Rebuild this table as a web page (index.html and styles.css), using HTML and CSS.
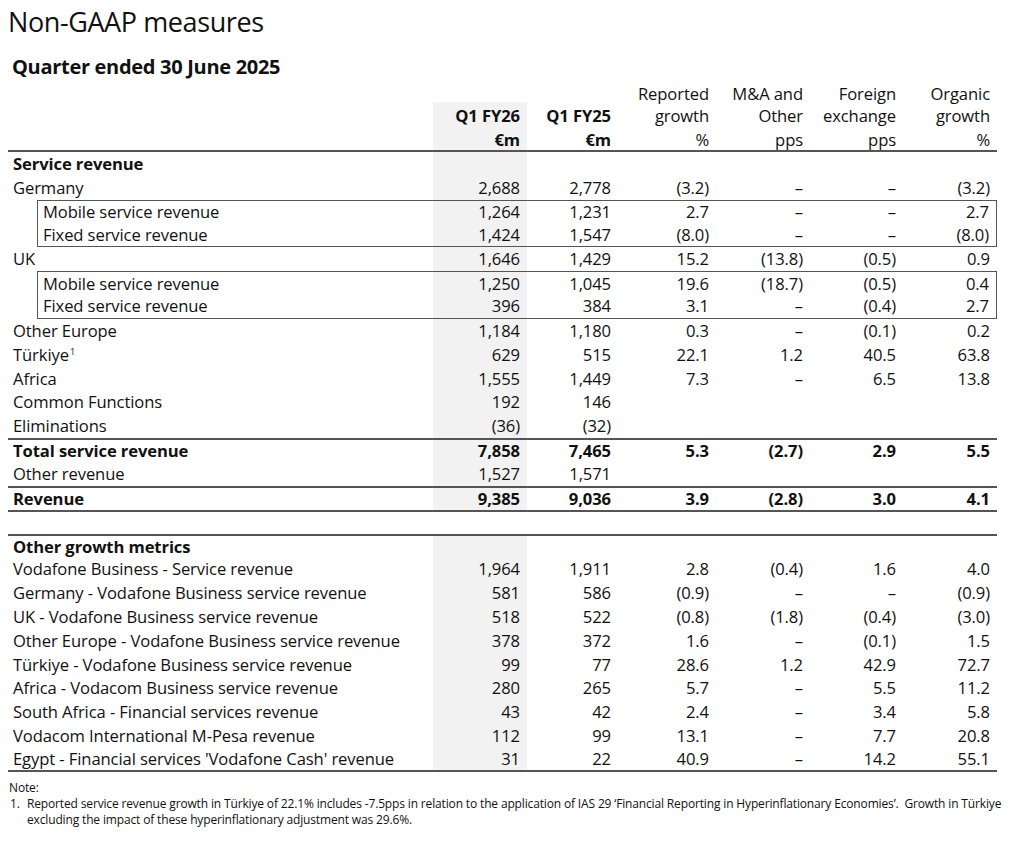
FILE: index.html
```html
<!DOCTYPE html>
<html lang="en">
<head>
<meta charset="utf-8">
<title>Non-GAAP measures</title>
<link rel="stylesheet" href="styles.css">
</head>
<body>
<div class="page">
  <h1 class="title">Non-GAAP measures</h1>
  <h2 class="subtitle">Quarter ended 30 June 2025</h2>

  <div class="tbl">
    <div class="head">
      <div class="hc lab"></div>
      <div class="hc"></div>
      <div class="hc"></div>
      <div class="hc">Reported</div>
      <div class="hc">M&amp;A and</div>
      <div class="hc">Foreign</div>
      <div class="hc">Organic</div>
      <div class="hc lab"></div>
      <div class="hc gray b">Q1 FY26</div>
      <div class="hc b">Q1 FY25</div>
      <div class="hc">growth</div>
      <div class="hc">Other</div>
      <div class="hc">exchange</div>
      <div class="hc">growth</div>
      <div class="hc lab"></div>
      <div class="hc gray b">€m</div>
      <div class="hc b">€m</div>
      <div class="hc">%</div>
      <div class="hc">pps</div>
      <div class="hc">pps</div>
      <div class="hc">%</div>
    </div>

    <div class="row"><div class="lab b">Service revenue</div><div class="n g"></div><div class="n"></div><div class="n"></div><div class="n"></div><div class="n"></div><div class="n"></div></div>
    <div class="row"><div class="lab">Germany</div><div class="n g">2,688</div><div class="n">2,778</div><div class="n">(3.2)</div><div class="n">–</div><div class="n">–</div><div class="n">(3.2)</div></div>
    <div class="box">
      <div class="row sub"><div class="lab">Mobile service revenue</div><div class="n g">1,264</div><div class="n">1,231</div><div class="n">2.7</div><div class="n">–</div><div class="n">–</div><div class="n">2.7</div></div>
      <div class="row sub"><div class="lab">Fixed service revenue</div><div class="n g">1,424</div><div class="n">1,547</div><div class="n">(8.0)</div><div class="n">–</div><div class="n">–</div><div class="n">(8.0)</div></div>
    </div>
    <div class="row"><div class="lab">UK</div><div class="n g">1,646</div><div class="n">1,429</div><div class="n">15.2</div><div class="n">(13.8)</div><div class="n">(0.5)</div><div class="n">0.9</div></div>
    <div class="box">
      <div class="row sub"><div class="lab">Mobile service revenue</div><div class="n g">1,250</div><div class="n">1,045</div><div class="n">19.6</div><div class="n">(18.7)</div><div class="n">(0.5)</div><div class="n">0.4</div></div>
      <div class="row sub"><div class="lab">Fixed service revenue</div><div class="n g">396</div><div class="n">384</div><div class="n">3.1</div><div class="n">–</div><div class="n">(0.4)</div><div class="n">2.7</div></div>
    </div>
    <div class="row"><div class="lab">Other Europe</div><div class="n g">1,184</div><div class="n">1,180</div><div class="n">0.3</div><div class="n">–</div><div class="n">(0.1)</div><div class="n">0.2</div></div>
    <div class="row"><div class="lab">Türkiye<sup class="fn">1</sup></div><div class="n g">629</div><div class="n">515</div><div class="n">22.1</div><div class="n">1.2</div><div class="n">40.5</div><div class="n">63.8</div></div>
    <div class="row"><div class="lab">Africa</div><div class="n g">1,555</div><div class="n">1,449</div><div class="n">7.3</div><div class="n">–</div><div class="n">6.5</div><div class="n">13.8</div></div>
    <div class="row"><div class="lab">Common Functions</div><div class="n g">192</div><div class="n">146</div><div class="n"></div><div class="n"></div><div class="n"></div><div class="n"></div></div>
    <div class="row"><div class="lab">Eliminations</div><div class="n g">(36)</div><div class="n">(32)</div><div class="n"></div><div class="n"></div><div class="n"></div><div class="n"></div></div>
    <div class="row rule b"><div class="lab">Total service revenue</div><div class="n g">7,858</div><div class="n">7,465</div><div class="n">5.3</div><div class="n">(2.7)</div><div class="n">2.9</div><div class="n">5.5</div></div>
    <div class="row"><div class="lab">Other revenue</div><div class="n g">1,527</div><div class="n">1,571</div><div class="n"></div><div class="n"></div><div class="n"></div><div class="n"></div></div>
    <div class="row rule b"><div class="lab">Revenue</div><div class="n g">9,385</div><div class="n">9,036</div><div class="n">3.9</div><div class="n">(2.8)</div><div class="n">3.0</div><div class="n">4.1</div></div>
    <div class="row rule blank"></div>
    <div class="row rule"><div class="lab b">Other growth metrics</div><div class="n g"></div><div class="n"></div><div class="n"></div><div class="n"></div><div class="n"></div><div class="n"></div></div>
    <div class="row"><div class="lab">Vodafone Business - Service revenue</div><div class="n g">1,964</div><div class="n">1,911</div><div class="n">2.8</div><div class="n">(0.4)</div><div class="n">1.6</div><div class="n">4.0</div></div>
    <div class="row"><div class="lab">Germany - Vodafone Business service revenue</div><div class="n g">581</div><div class="n">586</div><div class="n">(0.9)</div><div class="n">–</div><div class="n">–</div><div class="n">(0.9)</div></div>
    <div class="row"><div class="lab">UK - Vodafone Business service revenue</div><div class="n g">518</div><div class="n">522</div><div class="n">(0.8)</div><div class="n">(1.8)</div><div class="n">(0.4)</div><div class="n">(3.0)</div></div>
    <div class="row"><div class="lab">Other Europe - Vodafone Business service revenue</div><div class="n g">378</div><div class="n">372</div><div class="n">1.6</div><div class="n">–</div><div class="n">(0.1)</div><div class="n">1.5</div></div>
    <div class="row"><div class="lab">Türkiye - Vodafone Business service revenue</div><div class="n g">99</div><div class="n">77</div><div class="n">28.6</div><div class="n">1.2</div><div class="n">42.9</div><div class="n">72.7</div></div>
    <div class="row"><div class="lab">Africa - Vodacom Business service revenue</div><div class="n g">280</div><div class="n">265</div><div class="n">5.7</div><div class="n">–</div><div class="n">5.5</div><div class="n">11.2</div></div>
    <div class="row"><div class="lab">South Africa - Financial services revenue</div><div class="n g">43</div><div class="n">42</div><div class="n">2.4</div><div class="n">–</div><div class="n">3.4</div><div class="n">5.8</div></div>
    <div class="row"><div class="lab">Vodacom International M-Pesa revenue</div><div class="n g">112</div><div class="n">99</div><div class="n">13.1</div><div class="n">–</div><div class="n">7.7</div><div class="n">20.8</div></div>
    <div class="row last"><div class="lab">Egypt - Financial services 'Vodafone Cash' revenue</div><div class="n g">31</div><div class="n">22</div><div class="n">40.9</div><div class="n">–</div><div class="n">14.2</div><div class="n">55.1</div></div>
  </div>

  <div class="notes">
    <p class="note-head">Note:</p>
    <div class="note-item">
      <span class="note-num">1.</span>
      <span class="note-text">Reported service revenue growth in Türkiye of 22.1% includes -7.5pps in relation to the application of IAS 29 ‘Financial Reporting in Hyperinflationary Economies’.&nbsp; Growth in Türkiye excluding the impact of these hyperinflationary adjustment was 29.6%.</span>
    </div>
  </div>
</div>
</body>
</html>
```
FILE: styles.css
```css
* { box-sizing: border-box; }
html, body { margin: 0; padding: 0; background: #fff; }
body {
  font-family: "Open Sans", "Noto Sans", "Liberation Sans", sans-serif;
  color: #111;
}
.page { padding: 0 8px 0 8px; width: 1024px; }

.title {
  margin: 0;
  padding-top: 5px;
  font-size: 27px;
  font-weight: 400;
  line-height: 34px;
  letter-spacing: -0.4px;
}
.subtitle {
  margin: 0;
  padding-left: 4px;
  padding-top: 16px;
  font-size: 20px;
  font-weight: 700;
  line-height: 24px;
  letter-spacing: -0.3px;
}

.tbl {
  width: 989px;
  margin-top: 1px;
  font-size: 16.6px;
  letter-spacing: -0.1px;
}
.head, .row {
  display: grid;
  grid-template-columns: 425px 94px 91px 98px 94px 93px 94px;
}
.head { grid-template-rows: 22px 24px 24px; border-bottom: 2px solid #555; }
.hc { text-align: right; padding-right: 7px; padding-top: 2px; line-height: 23px; white-space: nowrap; }
.hc.lab { text-align: left; }
.gray { background: #f2f2f2; }
.b { font-weight: 700; }

.row { height: 23.85px; align-items: center; line-height: 22px; }
.row.rule { border-top: 2px solid #555; }
.row.last { border-bottom: 2px solid #555; }
.lab { padding-left: 5px; white-space: nowrap; height: 100%; display: flex; align-items: center; }
.n { text-align: right; padding-right: 7px; white-space: nowrap; height: 100%; display: flex; align-items: center; justify-content: flex-end; }
.n.g { background: #f2f2f2; }
.blank { display: block; }

.box {
  margin-left: 29px;
  border: 1px solid #555;
}
.box .row {
  grid-template-columns: 395px 94px 91px 98px 94px 93px 93px;
  height: 22.85px;
}
.fn { font-size: 9px; vertical-align: top; position: relative; top: -3px; margin-left: 1px; }

.notes { margin-top: 8px; font-size: 12px; line-height: 16px; letter-spacing: -0.15px; }
.note-head { margin: 0; padding-left: 1px; }
.note-item { display: flex; }
.note-num { flex: 0 0 19px; padding-left: 2px; }
.note-text { flex: 1; }
```
